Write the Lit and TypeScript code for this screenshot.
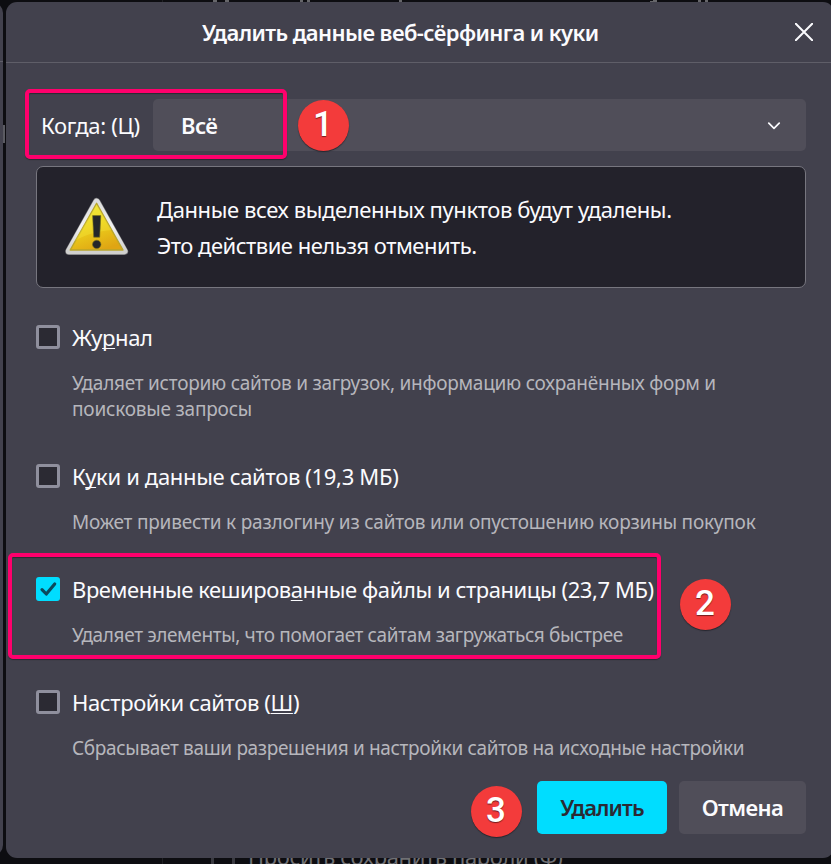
import { LitElement, html, css, svg, nothing } from "lit";
import { customElement, state } from "lit/decorators.js";
import { classMap } from "lit/directives/class-map.js";
import { styleMap } from "lit/directives/style-map.js";

interface Line {
  text: string;
  track: number;
}

interface Item {
  before: string;
  key: string;
  after: string;
  track: number;
  lines: Line[];
  checked: boolean;
}

const ITEMS: Item[] = [
  {
    before: "Жу", key: "р", after: "нал", track: -0.4, checked: false,
    lines: [
      { text: "Удаляет историю сайтов и загрузок, информацию сохранённых форм и", track: -0.25 },
      { text: "поисковые запросы", track: -0.2 },
    ],
  },
  {
    before: "К", key: "у", after: "ки и данные сайтов (19,3 МБ)", track: -0.33, checked: false,
    lines: [{ text: "Может привести к разлогину из сайтов или опустошению корзины покупок", track: -0.21 }],
  },
  {
    before: "Временные кеширов", key: "а", after: "нные файлы и страницы (23,7 МБ)", track: -0.42, checked: true,
    lines: [{ text: "Удаляет элементы, что помогает сайтам загружаться быстрее", track: -0.36 }],
  },
  {
    before: "Настройки сайтов (", key: "Ш", after: ")", track: -0.38, checked: false,
    lines: [{ text: "Сбрасывает ваши разрешения и настройки сайтов на исходные настройки", track: -0.335 }],
  },
];

const tracking = (v: number) => styleMap({ letterSpacing: `${v}px` });

@customElement("warning-icon")
export class WarningIcon extends LitElement {
  static styles = css`
    :host { display: block; width: 64px; height: 60px; }
    svg { display: block; }
  `;
  render() {
    return html`<svg width="64" height="60" viewBox="0 0 64 60">
      ${svg`
        <defs>
          <linearGradient id="rim" x1="0" y1="0" x2="0" y2="1">
            <stop offset="0" stop-color="#dcdcdc" /><stop offset=".5" stop-color="#f0f0f0" /><stop offset="1" stop-color="#d0d0ce" />
          </linearGradient>
          <linearGradient id="fill" x1=".2" y1="0" x2=".6" y2="1">
            <stop offset="0" stop-color="#ece93a" /><stop offset=".5" stop-color="#ecd01c" /><stop offset="1" stop-color="#dfa513" />
          </linearGradient>
        </defs>
        <path d="M31.6 4.8 59.3 54.3H4Z" fill="url(#rim)" stroke="#77777a" stroke-width="7.6" stroke-linejoin="round" />
        <path d="M31.6 4.8 59.3 54H4Z" fill="url(#rim)" stroke="url(#rim)" stroke-width="6.4" stroke-linejoin="round" />
        <path d="M31.6 6.3 58 53H5.2Z" fill="url(#fill)" stroke="#b8a52c" stroke-width="1.4" stroke-linejoin="round" />
        <path d="M31.6 7.3 46.5 33C34 34 21 37 9.8 44Z" fill="#f8ee45" opacity=".3" />
        <path d="M27.6 18.6h8.2l-1.1 21.6h-6Z" fill="#24262a" stroke="#77701c" stroke-width=".6" />
        <circle cx="31.7" cy="47.4" r="4.2" fill="#24262a" stroke="#77701c" stroke-width=".6" />`}
    </svg>`;
  }
}

@customElement("app-root")
export class AppRoot extends LitElement {
  @state() private items = ITEMS;

  static styles = css`
    :host {
      display: block; position: relative; width: 831px; height: 864px; overflow: hidden;
      background: #0d0d11; color: #fbfbfe; font: 22px/30px "Noto Sans", sans-serif;
    }
    * { box-sizing: border-box; }
    span { white-space: nowrap; }
    svg { display: block; }

    .backdrop { position: absolute; inset: 0; }
    .side { position: absolute; left: -20px; top: 2px; width: 23px; height: 854px; background: #42414d; border-radius: 11px; }
    .side::before { content: ""; display: block; margin-top: 59px; border-top: 1px solid #5f5e68; }
    .thumb { position: absolute; left: 3px; top: 125px; width: 2px; height: 18px; background: #5b5b62; }
    .rule { position: absolute; left: 162px; top: 0; width: 1px; height: 864px; background: #202024; }
    .marks { position: absolute; left: 0; top: 0; }
    .under { position: absolute; left: 211px; top: 841px; display: flex; align-items: flex-start; gap: 13px; color: #707074; letter-spacing: -.35px; }
    .under-box { width: 24px; height: 24px; border: 3px solid #3a3a41; border-radius: 3px; margin-top: 2px; }

    .dialog { position: absolute; left: 6px; top: 2px; width: 828px; height: 856px; background: #42414d; border-radius: 11px; }
    header { height: 61px; border-bottom: 1px solid #5f5e68; display: flex; align-items: center; padding: 0 21px 0 196px; justify-content: space-between; font-weight: 600; }
    header span { letter-spacing: -.58px; }
    .main { padding: 36px 28px 0 30px; }
    .when { display: flex; align-items: center; height: 52px; padding-left: 5px; letter-spacing: -.3px; }
    .select { margin-left: auto; width: 653px; height: 52px; border-radius: 5px; background: #504e59; display: flex; align-items: center; justify-content: space-between; padding: 0 25px 0 28px; font-weight: 600; letter-spacing: -.6px; }
    .select svg { margin-top: 2px; }
    .warn { height: 122px; margin-top: 15px; border: 1px solid #77767f; border-radius: 7px; background: #23222b; display: flex; align-items: center; padding-left: 28px; gap: 28px; line-height: 36px; }
    .warn-text { display: flex; flex-direction: column; align-items: flex-start; letter-spacing: -.4px; }
    .warn-text .second { letter-spacing: -.5px; }

    .list { padding-top: 35px; display: flex; flex-direction: column; gap: 40px; }
    .item { display: grid; grid-template-columns: 24px auto; column-gap: 12px; justify-content: start; justify-items: start; }
    .box { width: 24px; height: 24px; border: 3px solid #8f8f9d; border-radius: 3px; background: #2b2a33; margin-top: 2px; }
    .box.on { border: 0; background: #00ddff; }
    .title { margin: -1px 0 1px; }
    .key { text-decoration: underline; text-decoration-thickness: 1px; text-underline-offset: 2px; text-decoration-skip-ink: none; }
    .desc { grid-column: 2; color: #b6b6bc; font-size: 19px; line-height: 26px; margin-top: 17px; display: flex; flex-direction: column; align-items: flex-start; }

    footer { display: flex; justify-content: flex-end; gap: 12px; margin-top: 20px; }
    .btn { height: 53px; width: 127px; border-radius: 5px; background: #504e59; display: flex; align-items: center; justify-content: center; padding-bottom: 2px; font-weight: 600; letter-spacing: -.55px; }
    .btn.primary { width: 130px; background: #00ddff; color: #2b2a33; letter-spacing: -.9px; }

    .frame { position: absolute; border: 4px solid #ff006c; border-radius: 5px; box-shadow: 0 1px 1px #1a1a2099, inset 0 1px 1px #1a1a2099; }
    .frame.one { left: 25px; top: 89px; width: 262px; height: 70px; }
    .frame.two { left: 8px; top: 553px; width: 653px; height: 106px; }
    .badge { position: absolute; width: 51px; height: 51px; border-radius: 50%; background: #f33b3b; box-shadow: 0 1px 1px #1a1a20b0; display: flex; justify-content: center; padding-right: 1px; font: 500 35px/49px Roboto, sans-serif; color: #fff; text-shadow: 0 1px 1px #0008; }
    .badge.one { left: 298px; top: 100px; }
    .badge.two { left: 680px; top: 579px; }
    .badge.three { left: 471px; top: 786px; }
  `;

  private check() {
    return html`<svg width="24" height="24" viewBox="0 0 24 24"><path d="M6 12.6 10.3 17 18.7 7" fill="none" stroke="#0b4a5c" stroke-width="3.2" stroke-linecap="round" stroke-linejoin="round" /></svg>`;
  }

  private item(i: Item) {
    return html`<div class="item">
      <div class=${classMap({ box: true, on: i.checked })}>${i.checked ? this.check() : nothing}</div>
      <span class="title" style=${tracking(i.track)}>${i.before}<span class="key">${i.key}</span>${i.after}</span>
      <div class="desc">${i.lines.map((l) => html`<span style=${tracking(l.track)}>${l.text}</span>`)}</div>
    </div>`;
  }

  render() {
    return html`
      <div class="backdrop">
        <div class="rule"></div>
        <div class="side"></div>
        <div class="thumb"></div>
        <svg class="marks" width="831" height="2" fill="#66666a">
          <path d="M213 0h4v2h-4zM225 0h4v2h-4zM300 0h3v2h-3zM307 0h3v2h-3zM399 0h3v2h-3zM650 1h7v1h-7zM653 0h4v1h-4zM698 0h3v2h-3zM705 0h3v2h-3z" />
        </svg>
        <div class="under"><div class="under-box"></div><span>Просить сохранить пароли (Ф)</span></div>
      </div>
      <div class="dialog">
        <header>
          <span>Удалить данные веб-сёрфинга и куки</span>
          <svg width="18" height="18" viewBox="0 0 18 18"><path d="M.8.8 17.2 17.2M17.2.8.8 17.2" stroke="#fbfbfe" stroke-width="2" stroke-linecap="round" /></svg>
        </header>
        <div class="main">
          <div class="when">
            <span>Когда: (Ц)</span>
            <div class="select">
              <span>Всё</span>
              <svg width="14" height="8" viewBox="0 0 14 8"><path d="M1.8 1.2 7 6.3 12.2 1.2" fill="none" stroke="#fbfbfe" stroke-width="1.7" stroke-linecap="round" stroke-linejoin="round" /></svg>
            </div>
          </div>
          <div class="warn">
            <warning-icon></warning-icon>
            <div class="warn-text">
              <span>Данные всех выделенных пунктов будут удалены.</span>
              <span class="second">Это действие нельзя отменить.</span>
            </div>
          </div>
          <div class="list">${this.items.map((i) => this.item(i))}</div>
          <footer>
            <div class="btn primary"><span>Удалить</span></div>
            <div class="btn"><span>Отмена</span></div>
          </footer>
        </div>
      </div>
      <div class="frame one"></div>
      <div class="frame two"></div>
      <div class="badge one">1</div>
      <div class="badge two">2</div>
      <div class="badge three">3</div>
    `;
  }
}
